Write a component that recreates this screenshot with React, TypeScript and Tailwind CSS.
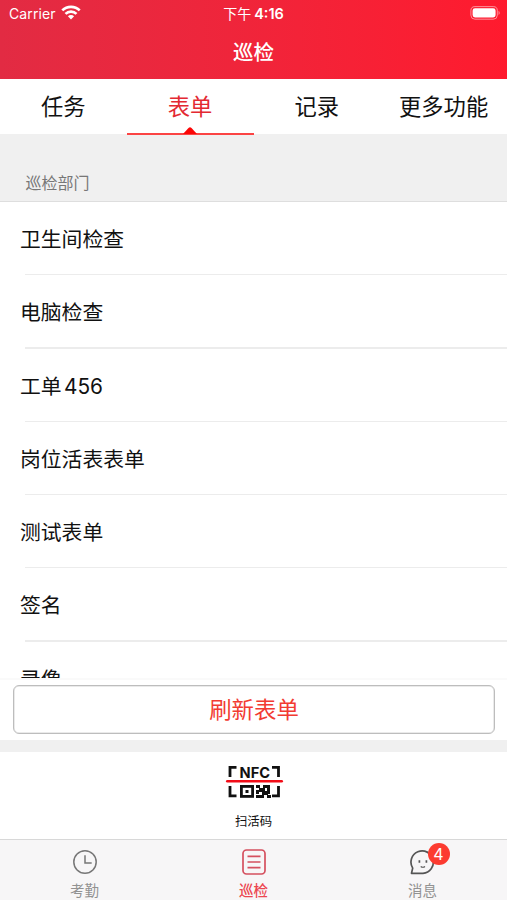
import React from "react";

const tabs = ["任务", "表单", "记录", "更多功能"];
const forms = ["卫生间检查", "电脑检查", "工单 456", "岗位活表表单", "测试表单", "签名", "录像"];

function StatusBar() {
  return (
    <div className="grid h-[27px] grid-cols-3 items-center pl-[9px] pr-[6px] text-[14px] leading-[27px]">
      <div className="flex items-center gap-[6px]">
        <span className="font-['Inter'] text-[14px] tracking-[0.1px]">Carrier</span>
        <svg className="-ml-px -mt-[2px]" width="20" height="15" viewBox="0 0 20 15" fill="none" stroke="white" strokeWidth="2.7">
          <path d="M1.3 5.4a12.4 12.4 0 0 1 17.4 0" />
          <path d="M4.5 8.9a7.8 7.8 0 0 1 11 0" />
          <path d="M10 14.4 6.9 11.2a4.4 4.4 0 0 1 6.2 0Z" fill="white" stroke="none" />
        </svg>
      </div>
      <div className="-ml-[3px] -mt-px whitespace-nowrap text-center">
        下午<span className="ml-[3px] text-[14.5px] font-semibold">4:16</span>
      </div>
      <svg className="-mt-px justify-self-end" width="31" height="14" viewBox="0 0 31 14">
        <rect x="0.9" y="0.6" width="26.4" height="12.6" rx="4" fill="none" stroke="white" strokeOpacity="0.5" />
        <rect x="2.6" y="2.3" width="23" height="9.2" rx="2.4" fill="white" />
        <path d="M28.6 4.8q2 2.1 0 4.3z" fill="white" fillOpacity="0.6" />
      </svg>
    </div>
  );
}

function ScanIcon() {
  return (
    <svg width="60" height="38" viewBox="0 0 60 38">
      <g fill="none" stroke="#111" strokeWidth="2.8">
        <path d="M6 13V3.4h6.5M48 3.4h6.5V13M6 22v9.800h6.500M48 31.800h6.500V22" />
        <rect x="17.400" y="22.400" width="11.200" height="10" />
      </g>
      <text x="15.500" y="13.500" textLength="30.500" lengthAdjust="spacingAndGlyphs" className="font-['Inter'] text-[15px] font-bold" fill="#111">NFC</text>
      <rect x="21.500" y="26" width="3" height="3" fill="#111" />
      <path fill="#111" d="M32 21h4v3h3v-3h7v6h-3v-3h-2v3h3v4h3v3h-4v-3h-3v3h-5v-3h3v-3h-3v2h-3v-4h3v-2h-3zM32 31h3v3h-3zM44 27h2v3h-2z" />
      <rect x="2" y="16" width="57" height="2.600" rx="1.300" fill="#f20d18" />
    </svg>
  );
}

function ClockIcon() {
  return (
    <svg width="26" height="26" viewBox="0 0 26 26" fill="none" stroke="#777" strokeWidth="1.5">
      <circle cx="13" cy="13" r="11.2" />
      <path d="M13 6.3V14h6.7" />
    </svg>
  );
}

function ListIcon() {
  return (
    <svg width="26" height="26" viewBox="0 0 26 26" fill="none" stroke="#d5505f" strokeWidth="1.7">
      <rect x="2" y="1" width="22" height="24" rx="3.5" />
      <path d="M6.500 7.300h13M6.500 13h13M6.500 18.700h13" />
    </svg>
  );
}

function MessageIcon() {
  return (
    <svg width="26" height="26" viewBox="0 0 26 26" fill="none" stroke="#555" strokeWidth="1.7" strokeLinejoin="round">
      <path d="M1.500 24.300l1.200-5.200A11.200 11.200 0 1 1 13 24.300Z" />
      <path d="M10.700 17.500q2.300 1.500 4.300 0" strokeWidth="1.2" />
      <path d="M9.400 11.300v2.500M16.400 11.300v2.500" />
    </svg>
  );
}

export default function App() {
  return (
    <main className="flex h-[900px] w-[507px] flex-col overflow-hidden bg-white font-['Inter','Noto_Sans_CJK_SC',sans-serif] text-[#111]">
      <header className="h-[79px] shrink-0 bg-linear-to-r from-[#e22b43] to-[#ff1a2e] text-white">
        <StatusBar />
        <h1 className="pt-px text-center text-[20.5px] font-medium leading-[50px]">巡检</h1>
      </header>

      <nav className="grid h-[55px] shrink-0 grid-cols-4">
        {tabs.map((tab) => (
          <button
            key={tab}
            className={
              tab === "表单"
                ? "relative border-b-2 border-[#fb4444] pt-[2px] text-[22.3px] leading-[52px] text-[#e32932]"
                : "whitespace-nowrap border-b-2 border-transparent pt-[2px] text-[22.3px] leading-[52px]"
            }
          >
            {tab}
            {tab === "表单" && (
              <svg className="absolute bottom-[-1px] left-1/2 -translate-x-1/2" width="14" height="7" viewBox="0 0 14 7">
                <path d="M0 7 5.5 1q1.5-1.5 3 0L14 7Z" fill="#fb0606" />
              </svg>
            )}
          </button>
        ))}
      </nav>

      <h2 className="h-[68px] shrink-0 border-b border-[#dedede] bg-[#f0f0f0] pl-[25.5px] pt-[37px] text-[16px] leading-6 text-[#777]">
        巡检部门
      </h2>

      <ul className="h-[476px] shrink-0 overflow-hidden">
        {forms.map((form) => (
          <li key={form} className="h-[73.3px]">
            <div className="h-[72px] pl-[20px] text-[20.8px] leading-[75px] [word-spacing:-3.5px]">{form}</div>
            <div className="ml-[25px] h-[1.3px] bg-[#ececec]" />
          </li>
        ))}
      </ul>

      <section className="h-[62px] shrink-0 border-t-2 border-[#fafafa] px-[13px] pt-[5px]">
        <button className="h-[49px] w-[482px] rounded-[6px] border-[1.5px] border-[#bdbdbd] text-[22.4px] leading-[45px] text-[#f23b32] shadow-[inset_0_0_0_0.5px_#d5d5d5]">
          刷新表单
        </button>
      </section>
      <div className="h-[12px] shrink-0 bg-[#f0f0f0]" />

      <section className="flex h-[87px] shrink-0 flex-col items-center pt-[12px]">
        <ScanIcon />
        <span className="mt-[9.5px] text-[12.4px] leading-5">扫活码</span>
      </section>

      <footer className="grid h-[61px] shrink-0 grid-cols-3 border-t border-[#d8d8d8] bg-[#f7f6f7] text-[14.5px] leading-5 text-[#929292]">
        <button className="flex flex-col items-center pt-[9px]">
          <ClockIcon />
          <span className="mt-[5.5px]">考勤</span>
        </button>
        <button className="flex flex-col items-center pt-[9px] font-medium text-[#ec4650]">
          <ListIcon />
          <span className="mt-[5.5px]">巡检</span>
        </button>
        <button className="flex flex-col items-center pt-[9px]">
          <span className="relative">
            <MessageIcon />
            <span className="absolute left-[18px] top-[-6px] h-[22px] w-[22px] rounded-full bg-[#fc3b30] text-center text-[16px] leading-[22px] text-white">
              4
            </span>
          </span>
          <span className="mt-[5.5px]">消息</span>
        </button>
      </footer>
    </main>
  );
}
